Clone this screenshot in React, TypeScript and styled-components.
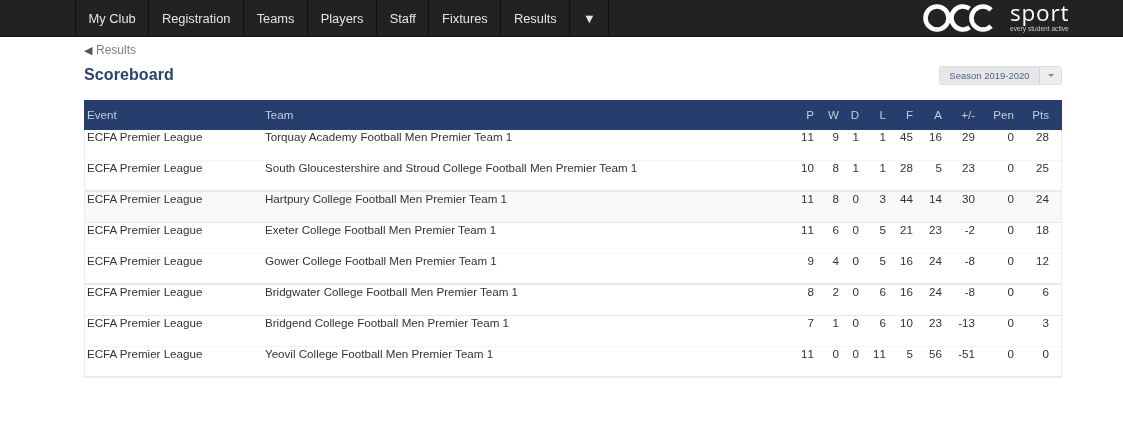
import React from "react";
import styled, { createGlobalStyle } from "styled-components";

const Global = createGlobalStyle`
  html, body { margin: 0; padding: 0; background: #fff; }
  body { font-family: "Liberation Sans", Arial, sans-serif; overflow: hidden; }
`;
const Page = styled.div`width: 1123px; height: 438px; background: #fff; overflow: hidden; filter: blur(0.5px);`;
const NavBar = styled.header`
  height: 36px; background: #222; border-bottom: 1px solid #111;
  display: flex; justify-content: space-between; padding: 0 52px 0 75px;
`;
const NavList = styled.nav`display: flex;`;
const NavItem = styled.a`
  display: flex; align-items: center; padding: 0 12.6px;
  border-left: 1px solid #111; color: #e4e4e4; font-size: 12.85px;
  &:last-child { border-right: 1px solid #111; }
`;
const Logo = styled.div`display: flex; gap: 15px; color: #fff; width: 148px;`;
const LogoMark = styled.svg`margin-top: 4px; flex: none;`;
const LogoWords = styled.div`display: flex; flex-direction: column; flex: none;`;
const LogoSport = styled.span`font: 22.5px/25px "Open Sans", sans-serif; letter-spacing: 0.8px;`;
const LogoTag = styled.span`font: 6.6px/7px "Liberation Sans", sans-serif; color: #c9c9c9; white-space: nowrap;`;
const Main = styled.main`width: 978px; margin-left: 84px;`;
const Crumb = styled.div`margin-top: 6px; height: 14px; font-size: 12px; line-height: 14px; color: #808080;`;
const Arrow = styled.span`font-size: 10.5px; color: #555; margin-right: 4px;`;
const TitleRow = styled.div`display: flex; justify-content: space-between; align-items: flex-start; margin-top: 5px; height: 38px;`;
const Title = styled.h1`margin: 3px 0 0; font-size: 16px; line-height: 20px; font-weight: 700; letter-spacing: 0.1px; color: #2a4270;`;
const SplitButton = styled.div`
  display: flex; height: 19px; margin-top: 4px; border-radius: 3px; background: #e7e7e7;
  border: 1px solid #dedede; box-sizing: border-box; font-size: 9.5px; color: #4d5f88;
`;
const ButtonLabel = styled.span`width: 99px; display: flex; align-items: center; justify-content: center;`;
const ButtonCaret = styled.span`
  width: 21px; display: flex; align-items: center; justify-content: center;
  background: #eee; border-left: 1px solid #d2d2d2;
  &::before { content: ""; border: 3px solid transparent; border-top-color: #888; border-bottom: 0; }
`;
const Board = styled.section`border: 1px solid #e8ebef; border-top: 0; border-bottom-width: 2px;`;
const columns = "178px 1fr 26px 25px 20px 27px 27px 29px 33px 39px 35px";
const HeadRow = styled.div`
  display: grid; grid-template-columns: ${columns}; align-items: center; box-sizing: border-box;
  height: 30px; margin: 0 -1px; padding: 0 13px 2px 3px; background: #263d6e; color: #c3cddd;
  font-size: 11.6px;
`;
const Row = styled.div<{ $line: string; $tint?: boolean }>`
  display: grid; grid-template-columns: ${columns}; box-sizing: border-box;
  height: 31px; padding: 0 12px 0 2px; color: #333; font-size: 11.6px; line-height: 14px;
  background: ${p => (p.$tint ? "#f9f9f9" : "#fff")};
  border-bottom: ${p => p.$line};
  &:last-child { height: 29px; }
`;
const Num = styled.span`text-align: right; font-kerning: none;`;

const heads = ["P", "W", "D", "L", "F", "A", "+/-", "Pen", "Pts"];
const rows: [string, (string | number)[], string, boolean?][] = [
  ["Torquay Academy Football Men Premier Team 1", [11, 9, 1, 1, 45, 16, 29, 0, 28], "1px solid #f3f4f6"],
  ["South Gloucestershire and Stroud College Football Men Premier Team 1", [10, 8, 1, 1, 28, 5, 23, 0, 25], "2px solid #e6e8ec"],
  ["Hartpury College Football Men Premier Team 1", [11, 8, 0, 3, 44, 14, 30, 0, 24], "1px solid #e6e8ec", true],
  ["Exeter College Football Men Premier Team 1", [11, 6, 0, 5, 21, 23, -2, 0, 18], "1px solid #f3f4f6"],
  ["Gower College Football Men Premier Team 1", [9, 4, 0, 5, 16, 24, -8, 0, 12], "2px solid #e6e8ec"],
  ["Bridgwater College Football Men Premier Team 1", [8, 2, 0, 6, 16, 24, -8, 0, 6], "1px solid #e6e8ec"],
  ["Bridgend College Football Men Premier Team 1", [7, 1, 0, 6, 10, 23, -13, 0, 3], "1px solid #f3f4f6"],
  ["Yeovil College Football Men Premier Team 1", [11, 0, 0, 11, 5, 56, -51, 0, 0], "0"],
];
const nav = ["My Club", "Registration", "Teams", "Players", "Staff", "Fixtures", "Results", "▼"];

export default function App() {
  return (
    <Page>
      <Global />
      <NavBar>
        <NavList>{nav.map(n => <NavItem key={n}>{n}</NavItem>)}</NavList>
        <Logo>
          <LogoMark width="72" height="28" viewBox="0 0 72 28" fill="none" stroke="#fff" strokeWidth="4.6">
            <circle cx="14" cy="14" r="11.500" />
            <path d="M46.600 4.600A11.500 11.500 0 1 0 46.600 23.400" />
            <path d="M68.100 5.900A11.500 11.500 0 1 0 68.100 22.100" />
          </LogoMark>
          <LogoWords>
            <LogoSport>sport</LogoSport>
            <LogoTag>every student active</LogoTag>
          </LogoWords>
        </Logo>
      </NavBar>
      <Main>
        <Crumb><Arrow>◀</Arrow>Results</Crumb>
        <TitleRow>
          <Title>Scoreboard</Title>
          <SplitButton>
            <ButtonLabel>Season 2019-2020</ButtonLabel>
            <ButtonCaret />
          </SplitButton>
        </TitleRow>
        <Board>
          <HeadRow>
            <span>Event</span>
            <span>Team</span>
            {heads.map(h => <Num key={h}>{h}</Num>)}
          </HeadRow>
          {rows.map(([team, stats, line, tint]) => (
            <Row key={team} $line={line} $tint={tint}>
              <span>ECFA Premier League</span>
              <span>{team}</span>
              {stats.map((s, i) => <Num key={i}>{s}</Num>)}
            </Row>
          ))}
        </Board>
      </Main>
    </Page>
  );
}
